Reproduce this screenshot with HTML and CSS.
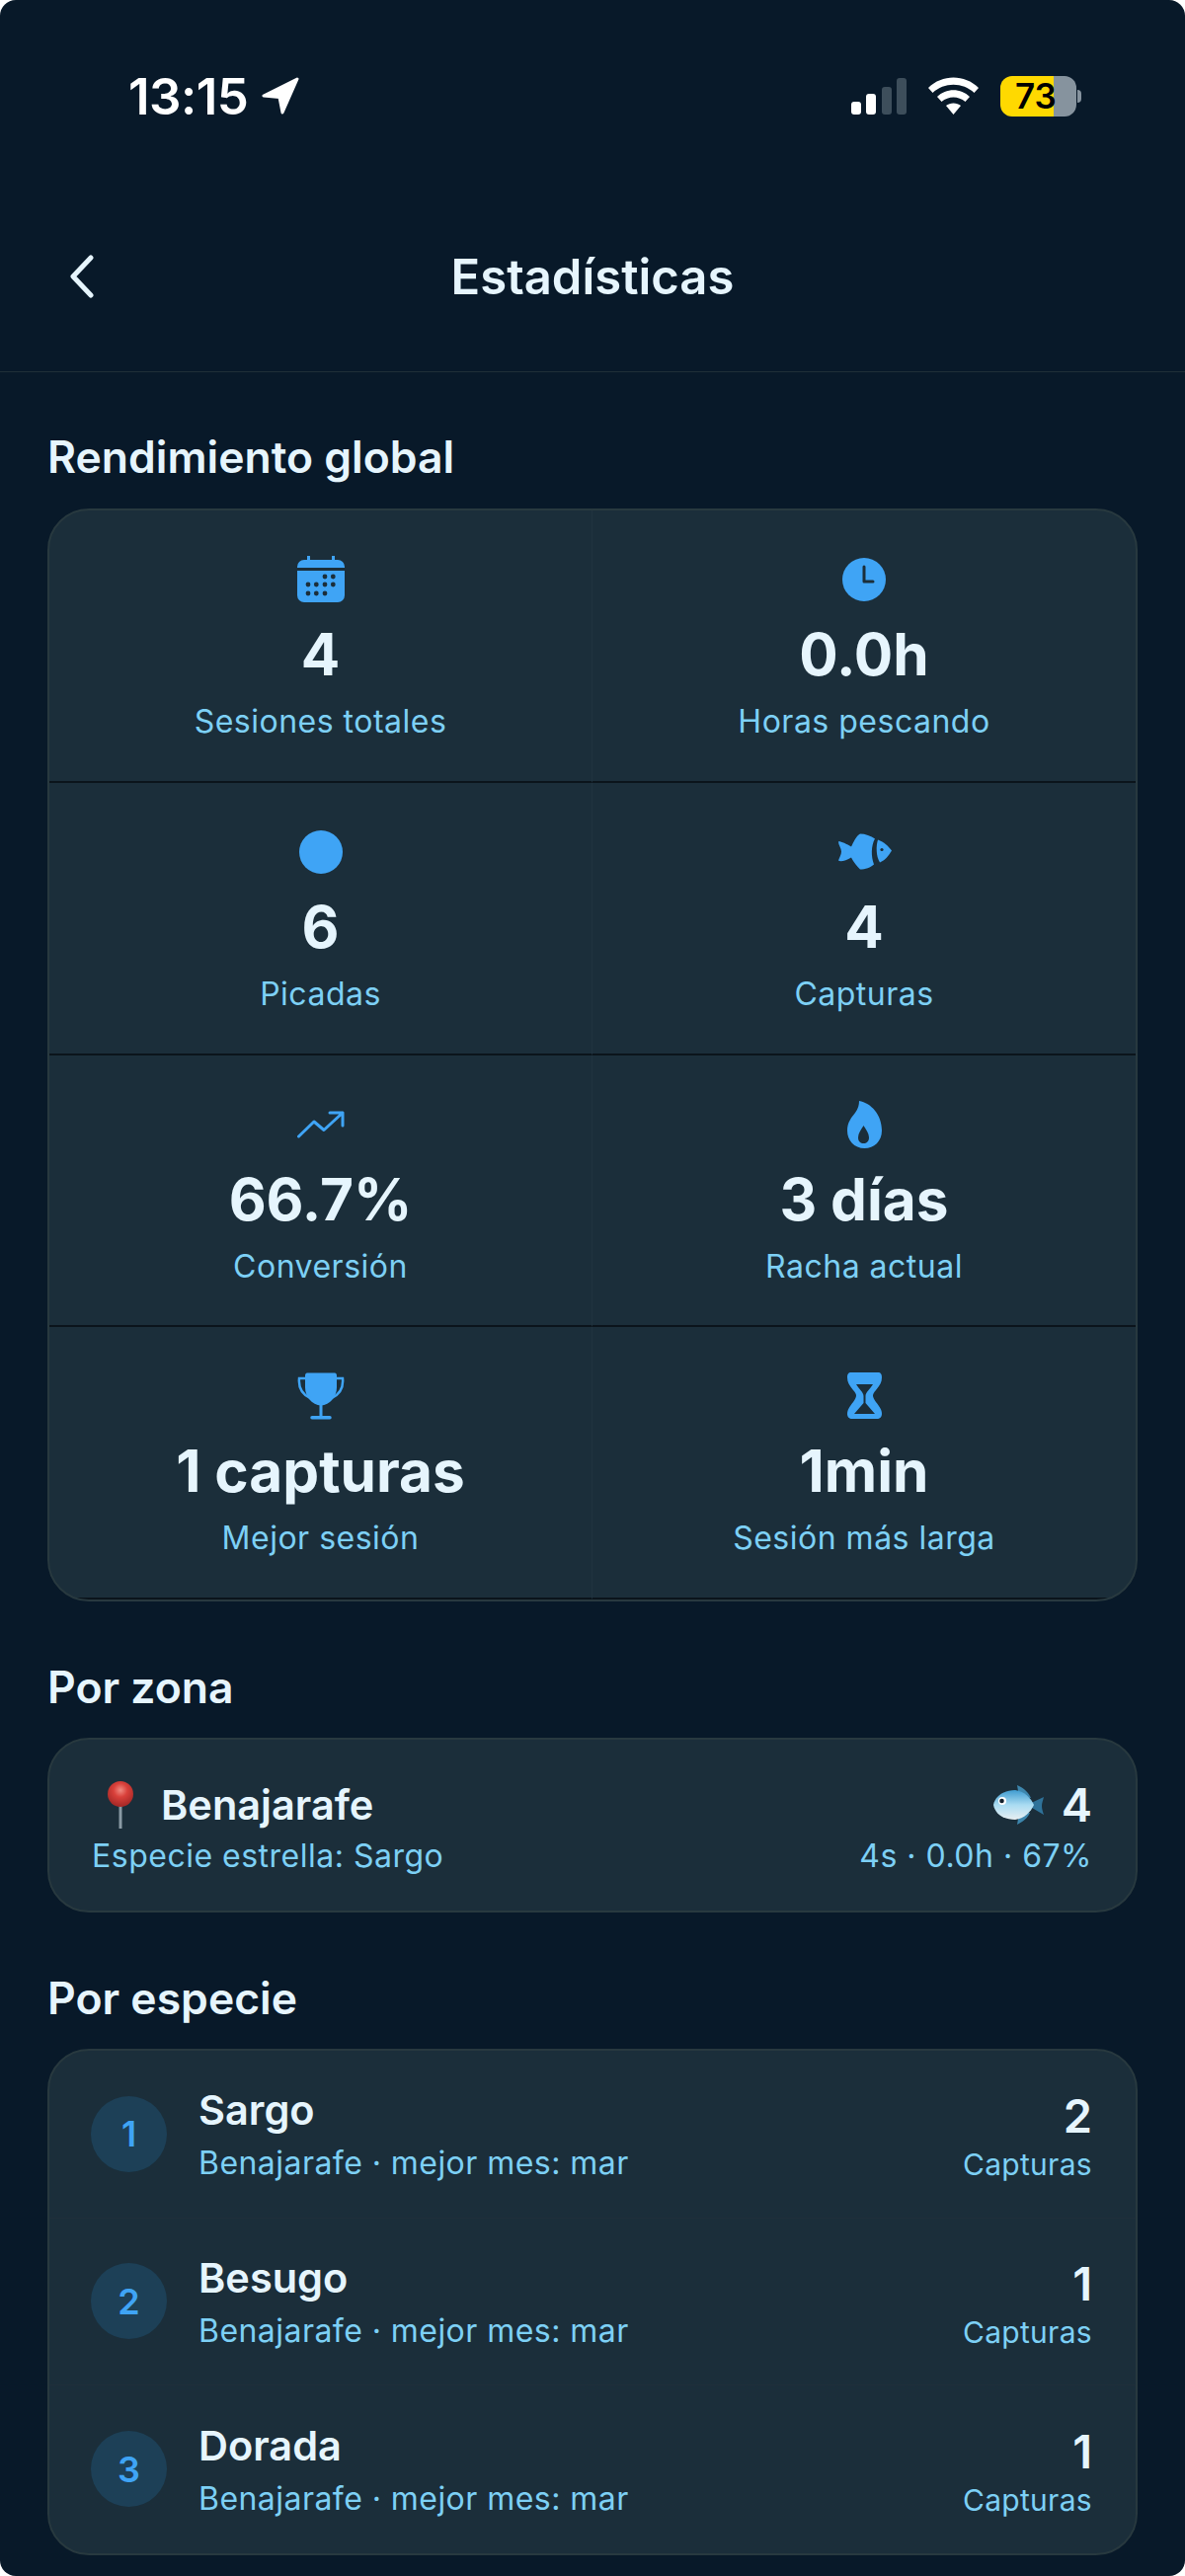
FILE: index.html
```html
<!DOCTYPE html>
<html lang="es">
<head>
    <meta charset="UTF-8">
    <title>Estadísticas</title>
    <link rel="stylesheet" href="styles.css">
</head>
<body>
<div class="screen">

    <div class="status">
        <div class="status-left">
            <span class="time">13:15</span>
            <svg class="loc" width="38" height="38" viewBox="0 0 38 38"><path d="M36 2 L2 19 L18 20.500 L21 36 Z" fill="#fff" stroke="#fff" stroke-width="3" stroke-linejoin="round"/></svg>
        </div>
        <div class="status-right">
            <div class="signal">
                <i class="bar bar1"></i><i class="bar bar2"></i><i class="bar bar3"></i><i class="bar bar4"></i>
            </div>
            <svg class="wifi" width="51" height="38" viewBox="0 0 51 38">
                <path d="M0 11 C14 -3 37 -3 51 11 L46.500 16 C35 5 16 5 4.500 16 Z" fill="#fff"/>
                <path d="M9 20 C18 11 33 11 42 20 L37.500 25 C30.500 19 20.500 19 13.500 25 Z" fill="#fff"/>
                <path d="M18 29 C22 25.500 29 25.500 33 29 L25.500 38 Z" fill="#fff"/>
            </svg>
            <div class="battery">
                <div class="battery-body"><span>73</span></div>
                <i class="battery-nub"></i>
            </div>
        </div>
    </div>

    <header class="topbar">
        <svg class="back" width="24" height="44" viewBox="0 0 24 44"><path d="M21 3 L3 22 L21 41" fill="none" stroke="#e6f5fd" stroke-width="5" stroke-linecap="round" stroke-linejoin="round"/></svg>
        <h1>Estadísticas</h1>
    </header>

    <main class="content">
        <section>
            <h2>Rendimiento global</h2>
            <div class="card stats">
                <div class="stat">
                    <svg class="icon" width="48" height="48" viewBox="0 0 48 48">
                        <path d="M10 0 h3 v4 h22 v-4 h3 v4 h3 a7 7 0 0 1 7 7 v1 H0 v-1 a7 7 0 0 1 7 -7 h3 Z" fill="#3fa4f5"/>
                        <path d="M0 15 H48 V40 a7 7 0 0 1 -7 7 H7 a7 7 0 0 1 -7 -7 Z" fill="#3fa4f5"/>
                        <g fill="#1b2e3a">
                            <circle cx="28" cy="21" r="2.400"/><circle cx="36.300" cy="21" r="2.400"/>
                            <circle cx="11" cy="29" r="2.400"/><circle cx="19.300" cy="29" r="2.400"/><circle cx="28" cy="29" r="2.400"/><circle cx="36.300" cy="29" r="2.400"/>
                            <circle cx="11" cy="38" r="2.400"/><circle cx="19.300" cy="38" r="2.400"/><circle cx="28" cy="38" r="2.400"/>
                        </g>
                    </svg>
                    <div class="value">4</div>
                    <div class="label">Sesiones totales</div>
                </div>
                <div class="stat">
                    <svg class="icon" width="48" height="48" viewBox="0 0 48 48">
                        <circle cx="24" cy="24" r="22" fill="#3fa4f5"/>
                        <path d="M24 11 V26 H33" fill="none" stroke="#1b2e3a" stroke-width="3" stroke-linecap="round" stroke-linejoin="round"/>
                    </svg>
                    <div class="value">0.0h</div>
                    <div class="label">Horas pescando</div>
                </div>
                <div class="stat">
                    <svg class="icon" width="48" height="48" viewBox="0 0 48 48"><circle cx="24" cy="24" r="22" fill="#3fa4f5"/></svg>
                    <div class="value">6</div>
                    <div class="label">Picadas</div>
                </div>
                <div class="stat">
                    <svg class="icon" width="55" height="48" viewBox="0 -4.500 55 48">
                        <path d="M1 9 C2 8 9 11 14 14 C16 10 19 3 23 1 C28 1 34 3 38 6 C34 13 34 24 37 32 C34 35 28 37 23 37 C20 34 16 29 14 25 C9 28 3 30 1 28 C2 25 4 22 4 19 C4 16 1 12 1 9 Z" fill="#3fa4f5"/>
                        <path d="M41 7 C47 9 52 14 55 18 C52 23 48 28 43 30 C39 24 39 13 41 7 Z" fill="#3fa4f5"/>
                        <circle cx="45" cy="17" r="1.600" fill="#1b2e3a"/>
                    </svg>
                    <div class="value">4</div>
                    <div class="label">Capturas</div>
                </div>
                <div class="stat">
                    <svg class="icon" width="48" height="48" viewBox="0 0 48 48">
                        <path d="M1.500 36 L17 21 L27 29.500 L46 12 M33 12 H46 V25" fill="none" stroke="#3fa4f5" stroke-width="3" stroke-linecap="round" stroke-linejoin="round"/>
                    </svg>
                    <div class="value">66.7%</div>
                    <div class="label">Conversión</div>
                </div>
                <div class="stat">
                    <svg class="icon" width="35" height="48" viewBox="0 0 35 48">
                        <path fill-rule="evenodd" d="M12 0 C24 2 35 14 35 30 C35 41 27 48 17.500 48 C7 48 0 40 0 30 C0 22 4 17 8 12 C11 8 12 4 12 0 Z M16.500 25 C14 29 11 33 11 37 C11 41 13.500 43 16.500 43 C19.500 43 22 41 22 37 C22 33 19 29 16.500 25 Z" fill="#3fa4f5"/>
                    </svg>
                    <div class="value">3 días</div>
                    <div class="label">Racha actual</div>
                </div>
                <div class="stat">
                    <svg class="icon" width="48" height="48" viewBox="0 0 48 48">
                        <path d="M10 0.500 H38 C39 0.500 40 1.500 40 3 V15 C40 25 33 33 24 33.500 C15 33 8 25 8 15 V3 C8 1.500 9 0.500 10 0.500 Z" fill="#3fa4f5"/>
                        <path d="M9 6 H2 C1 16 5 22 13 26 M39 6 H46 C47 16 43 22 35 26" fill="none" stroke="#3fa4f5" stroke-width="2.500"/>
                        <path d="M22.500 32 H25.500 V44 H33 a1.500 1.500 0 0 1 0 3.500 H15 a1.500 1.500 0 0 1 0 -3.500 H22.500 Z" fill="#3fa4f5"/>
                    </svg>
                    <div class="value">1 capturas</div>
                    <div class="label">Mejor sesión</div>
                </div>
                <div class="stat">
                    <svg class="icon" width="35" height="48" viewBox="0 0 35 48">
                        <path fill-rule="evenodd" d="M4 0 H31 C34 0 35 2 35 5 C35 10 33 13 29 18 C27 20 26 22 26 23.500 C26 25 27 27 29 30 C33 35 35 38 35 42 C35 45 33 47 30 47 H5 C2 47 0 45 0 42 C0 38 2 35 6 30 C8 27 9 25 9 23.500 C9 22 8 20 6 18 C2 13 0 10 0 5 C0 2 1 0 4 0 Z M9 12 H26 C23 17 18.500 20 18.500 24 V31 L28 42 H7 L16.500 31 V24 C16.500 20 12 17 9 12 Z" fill="#3fa4f5"/>
                    </svg>
                    <div class="value">1min</div>
                    <div class="label">Sesión más larga</div>
                </div>
            </div>
        </section>

        <section>
            <h2>Por zona</h2>
            <div class="card zone">
                <div class="zone-row">
                    <div class="zone-name">
                        <svg class="pin" width="28" height="48" viewBox="0 0 28 48">
                            <defs>
                                <radialGradient id="pinhead" cx="50%" cy="35%" r="60%">
                                    <stop offset="0" stop-color="#f08a80"/>
                                    <stop offset="0.45" stop-color="#d9403a"/>
                                    <stop offset="1" stop-color="#a92a28"/>
                                </radialGradient>
                            </defs>
                            <rect x="12.500" y="22" width="3" height="26" fill="#8a9aa4"/>
                            <circle cx="14" cy="13" r="13" fill="url(#pinhead)"/>
                        </svg>
                        <span class="name">Benajarafe</span>
                    </div>
                    <div class="zone-count">
                        <svg class="fish" width="52" height="40" viewBox="0 0 52 40">
                            <defs>
                                <linearGradient id="fishbody" x1="0" y1="0" x2="0" y2="1">
                                    <stop offset="0" stop-color="#3f9bd0"/>
                                    <stop offset="0.5" stop-color="#a9dcf2"/>
                                    <stop offset="1" stop-color="#e8eff2"/>
                                </linearGradient>
                            </defs>
                            <path d="M34 20 L51 12 C50 16 49 18 49 21 C49 24 50 27 51 30 Z" fill="#2f7299"/>
                            <path d="M24 0 C31 3 36 8 38 13 L26 12 Z M24 40 C30 37 35 33 37 28 L26 28 Z" fill="#3d86ad"/>
                            <path d="M0 20 C2 10 12 5 22 5 C31 6 38 13 41 20 C38 27 31 34 22 35 C11 35 2 30 0 20 Z" fill="url(#fishbody)"/>
                            <circle cx="9" cy="16" r="4" fill="#fff"/>
                            <circle cx="8.500" cy="16" r="2.300" fill="#13202b"/>
                        </svg>
                        <span class="count">4</span>
                    </div>
                </div>
                <div class="zone-row zone-sub">
                    <span class="label">Especie estrella: Sargo</span>
                    <span class="label">4s · 0.0h · 67%</span>
                </div>
            </div>
        </section>

        <section>
            <h2>Por especie</h2>
            <div class="card species">
                <div class="species-row">
                    <div class="rank">1</div>
                    <div class="species-info">
                        <div class="name">Sargo</div>
                        <div class="label">Benajarafe · mejor mes: mar</div>
                    </div>
                    <div class="species-total">
                        <div class="count">2</div>
                        <div class="label">Capturas</div>
                    </div>
                </div>
                <div class="species-row">
                    <div class="rank">2</div>
                    <div class="species-info">
                        <div class="name">Besugo</div>
                        <div class="label">Benajarafe · mejor mes: mar</div>
                    </div>
                    <div class="species-total">
                        <div class="count">1</div>
                        <div class="label">Capturas</div>
                    </div>
                </div>
                <div class="species-row">
                    <div class="rank">3</div>
                    <div class="species-info">
                        <div class="name">Dorada</div>
                        <div class="label">Benajarafe · mejor mes: mar</div>
                    </div>
                    <div class="species-total">
                        <div class="count">1</div>
                        <div class="label">Capturas</div>
                    </div>
                </div>
            </div>
        </section>
    </main>
</div>
</body>
</html>
```

FILE: styles.css
```css
* {
    box-sizing: border-box;
}
body {
    background: #fff;
    color: #e6f5fd;
    font-family: Inter, "Liberation Sans", sans-serif;
    margin: 0;
    padding: 0;
}
.screen {
    background: #081929;
    border-radius: 16px;
    height: 2609px;
    overflow: hidden;
    width: 1200px;
}

/* status bar */
.status {
    display: flex;
    height: 184px;
    justify-content: space-between;
    padding: 72px 105px 0 130px;
}
.status-left {
    align-items: center;
    display: flex;
    gap: 14px;
    height: 50px;
}
.time {
    color: #fff;
    font-size: 51px;
    font-weight: 600;
    letter-spacing: -0.5px;
}
.status-right {
    align-items: center;
    display: flex;
    gap: 22px;
    height: 50px;
}
.signal {
    align-items: flex-end;
    display: flex;
    gap: 5.5px;
    height: 37px;
}
.bar {
    background: #fff;
    border-radius: 3px;
    display: block;
    width: 10px;
}
.bar1 {
    height: 13px;
}
.bar2 {
    height: 21px;
}
.bar3 {
    background: #3d4e5b;
    height: 28px;
}
.bar4 {
    background: #3d4e5b;
    height: 37px;
}
.battery {
    align-items: center;
    display: flex;
    gap: 1px;
}
.battery-body {
    background: linear-gradient(90deg, #ffd900 0, #ffd900 54px, #86939e 54px);
    border-radius: 12px;
    color: #000;
    font-size: 35px;
    font-weight: 600;
    height: 41px;
    line-height: 41px;
    padding-left: 15px;
    width: 77px;
}
.battery-nub {
    background: #86939e;
    border-radius: 0 5px 5px 0;
    display: block;
    height: 13px;
    width: 4px;
}

/* title bar */
.topbar {
    align-items: center;
    border-bottom: 1px solid #1f2f38;
    display: flex;
    height: 193px;
    justify-content: center;
    position: relative;
}
.topbar h1 {
    font-size: 49px;
    font-weight: 600;
    margin: 0;
}
.back {
    left: 71px;
    position: absolute;
    top: 74px;
}

.content {
    padding: 60px 48px 0;
}
section {
    margin-bottom: 61px;
}
h2 {
    font-size: 44.5px;
    font-weight: 600;
    line-height: 53px;
    margin: 0 0 25px;
}
section + section h2 {
    margin-bottom: 24px;
}
.card {
    background: #1b2e3a;
    border: 2px solid #28393f;
    border-radius: 42px;
    overflow: hidden;
}
.label {
    color: #7dd0f5;
    font-size: 32px;
    font-weight: 400;
    letter-spacing: 0.5px;
}
.name {
    font-size: 41.5px;
    font-weight: 600;
}
.count {
    font-size: 47px;
    font-weight: 600;
}

/* global stats */
.stats {
    display: grid;
    grid-template-columns: 1fr 1fr;
}
.stat {
    align-items: center;
    border-bottom: 2px solid #0b141b;
    display: flex;
    flex-direction: column;
    height: 275.75px;
    padding-top: 46px;
}
.stat:nth-child(odd) {
    border-right: 1px solid #213340;
}
.stat .value {
    font-size: 58.5px;
    font-weight: 700;
    line-height: 70px;
    margin-top: 17px;
}
.stat .label {
    line-height: 40px;
    margin-top: 13px;
}

/* zone card */
.zone {
    height: 177px;
    padding: 37px 44px 0 43px;
}
.zone-row {
    align-items: center;
    display: flex;
    justify-content: space-between;
}
.zone-row .name {
    line-height: 48px;
}
.zone-name {
    align-items: center;
    display: flex;
    gap: 27px;
}
.pin {
    margin-left: 15px;
}
.zone-count {
    align-items: center;
    display: flex;
    gap: 17px;
}
.zone-sub {
    margin-top: 4px;
}

/* species list */
.species-row {
    align-items: center;
    border-bottom: 1px solid #202f3a;
    display: flex;
    gap: 32px;
    height: 169.5px;
    padding: 0 44px 0 42px;
}
.species-row:last-child {
    border-bottom: 0;
}
.rank {
    align-items: center;
    background: #1d4057;
    border-radius: 50%;
    color: #3fa4f5;
    display: flex;
    flex: none;
    font-size: 36px;
    font-weight: 600;
    height: 77px;
    justify-content: center;
    width: 77px;
}
.species-info {
    flex: 1;
    padding-top: 2px;
}
.species-info .name {
    line-height: 48px;
    margin-bottom: 10px;
}
.species-info .label {
    letter-spacing: 0.45px;
    line-height: 40px;
}
.species-total {
    padding-top: 6px;
    text-align: right;
}
.species-total .count {
    line-height: 54px;
    margin-bottom: 2px;
}
.species-total .label {
    font-size: 30px;
    letter-spacing: 0.3px;
    line-height: 40px;
}
```
